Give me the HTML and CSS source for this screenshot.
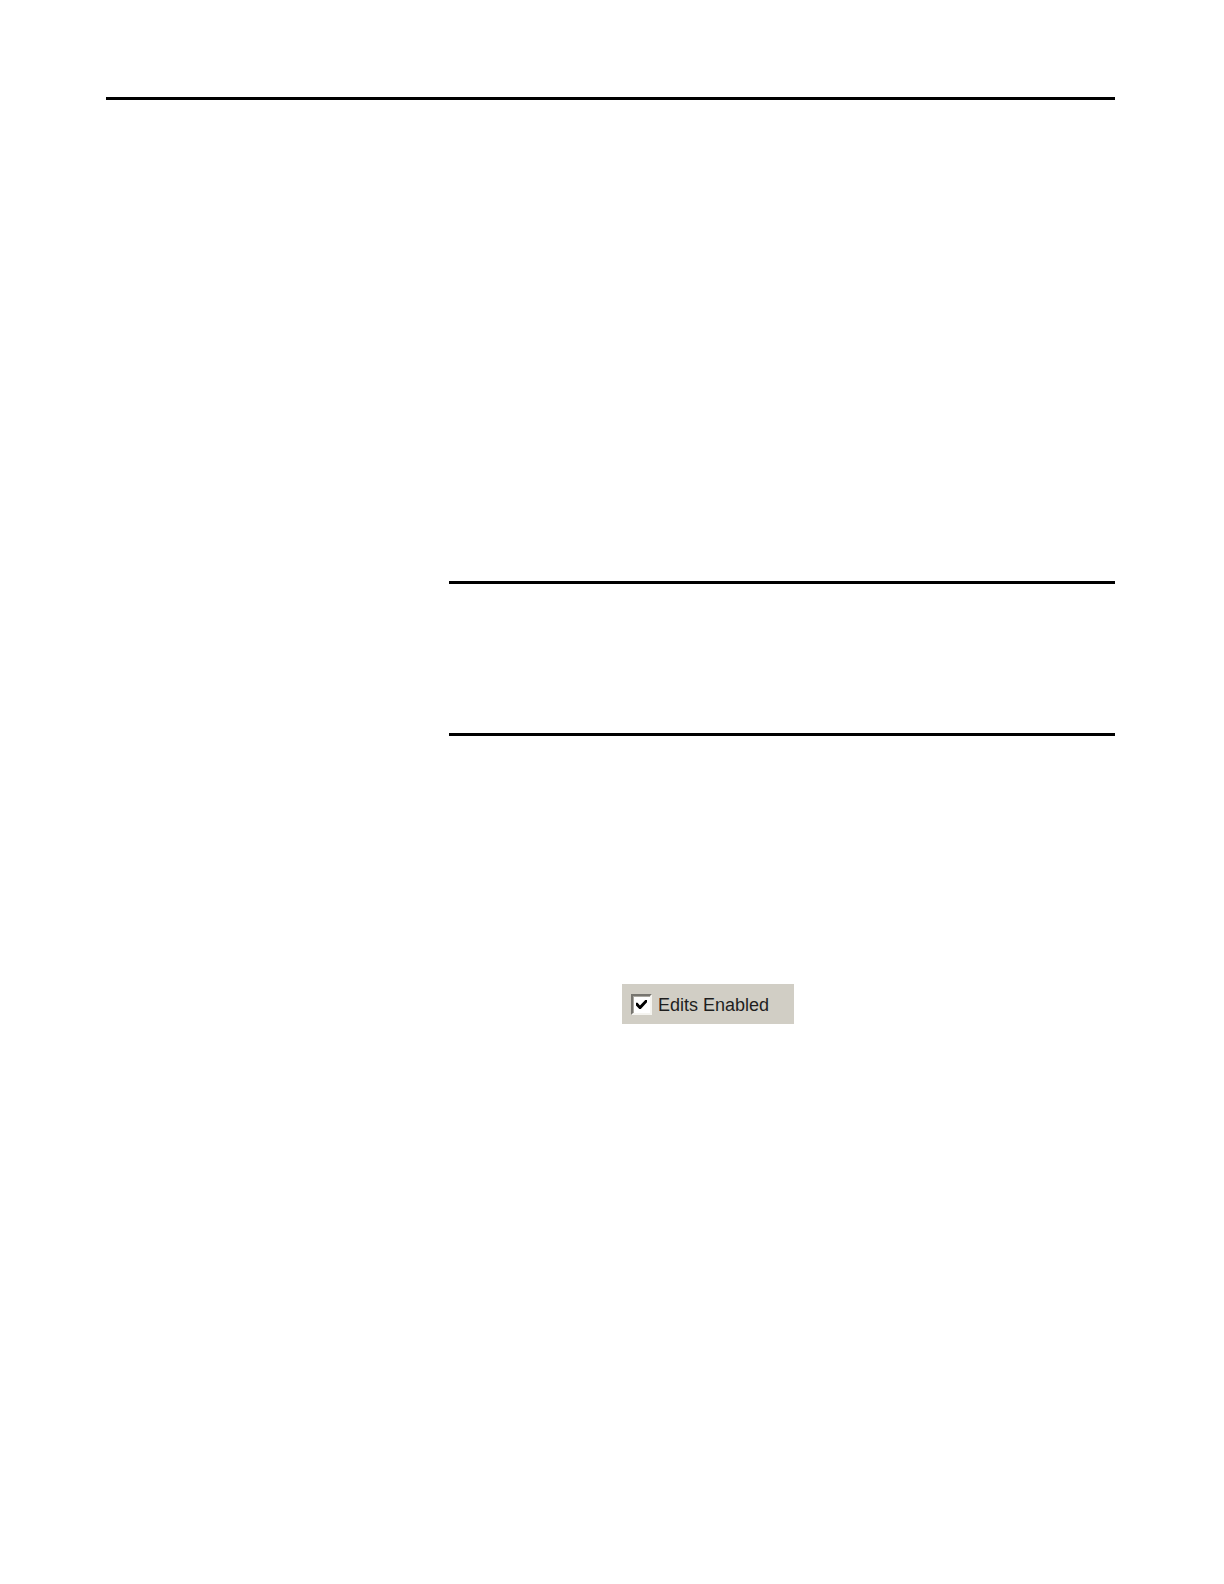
FILE: index.html
```
<!DOCTYPE html>
<html lang="en">
<head>
    <meta charset="UTF-8">
    <meta name="viewport" content="width=device-width, initial-scale=1.0">
    <title>Edits Enabled</title>
    <link rel="stylesheet" href="styles.css">
</head>
<body>
    <div class="page">
        <hr class="rule">
        <main class="content">
            <section class="note"></section>
            <div class="option">
                <input type="checkbox" id="edits-enabled" class="option-box" checked>
                <label for="edits-enabled">Edits Enabled</label>
            </div>
        </main>
    </div>
</body>
</html>
```
FILE: styles.css
```
* {
    box-sizing: border-box;
    margin: 0;
    padding: 0;
}

body {
    font-family: "Liberation Sans", Arial, sans-serif;
    background-color: #fff;
}

.page {
    min-height: 100vh;
    padding: 97px 109px 0 106px;
}

.rule {
    height: 3px;
    border: none;
    background-color: #000;
}

.content {
    padding: 481px 0 0 343px;
}

.note {
    min-height: 155px;
    border-top: 3px solid #000;
    border-bottom: 3px solid #000;
}

.option {
    display: flex;
    align-items: flex-start;
    gap: 6px;
    width: fit-content;
    margin: 248px 0 0 173px;
    padding: 10px 25px 8px 9px;
    background-color: #d1cec5;
    color: #1e1e1e;
    font-size: 18px;
    line-height: 22px;
}

/* sunken box with a bevelled edge */
.option-box {
    appearance: none;
    display: grid;
    place-items: center;
    width: 21px;
    height: 21px;
    border: 2px solid;
    border-color: #77756f #f5f4f0 #f5f4f0 #77756f;
    background-color: #fff;
    box-shadow: inset 1px 1px 0 #aaa8a1;
}

.option-box:checked::before {
    content: "";
    width: 11px;
    height: 9px;
    background-color: #000;
    clip-path: polygon(0 30%, 14% 30%, 36% 62%, 84% 0, 100% 0, 100% 26%, 44% 100%, 30% 100%, 0 62%);
}
```
